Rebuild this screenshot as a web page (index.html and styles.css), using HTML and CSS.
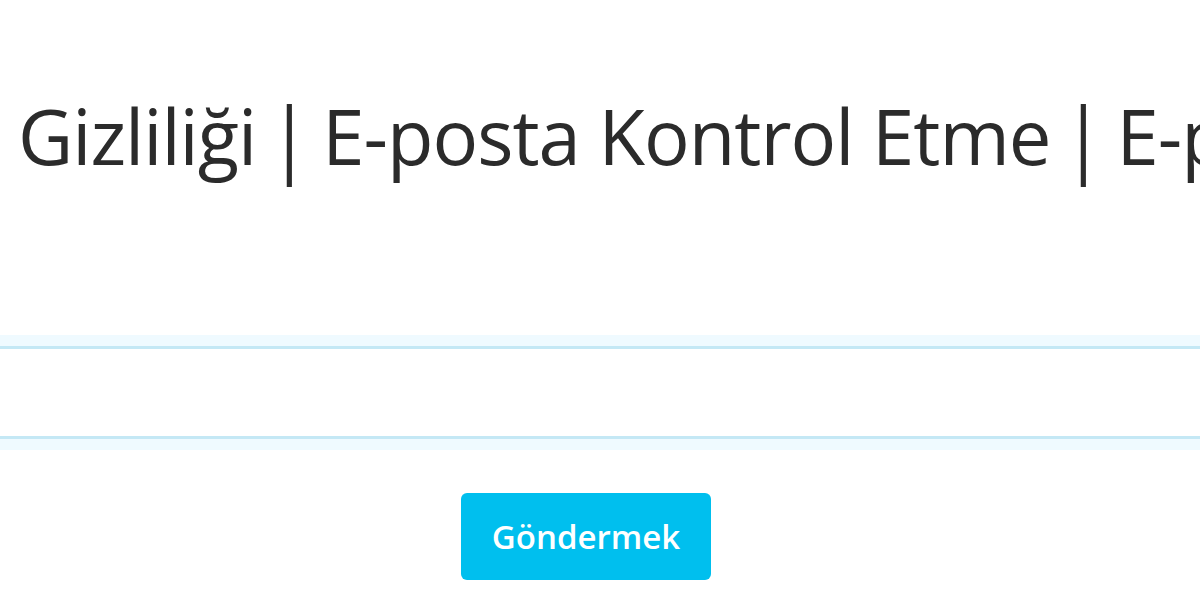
FILE: index.html
```html
<!DOCTYPE html>
<html lang="tr">
<head>
<meta charset="utf-8">
<title>E-posta Gizliliği</title>
<link rel="stylesheet" href="styles.css">
</head>
<body>
<div class="page">
  <h1 class="title">Gizliliği<span class="sep">|</span>E-posta Kontrol Etme<span class="sep">|</span>E-posta Doğrulama</h1>
  <form class="form">
    <input class="field" type="text" aria-label="E-posta">
    <div class="actions">
      <button class="btn" type="button">Göndermek</button>
    </div>
  </form>
</div>
</body>
</html>
```
FILE: styles.css
```css
html, body {
  margin: 0;
  padding: 0;
  background: #ffffff;
  overflow: hidden;
}
.page {
  width: 1200px;
  height: 600px;
  overflow: hidden;
  font-family: "Open Sans", "Noto Sans", sans-serif;
}
.title {
  margin: 0;
  padding: 86px 0 0 18px;
  height: 255px;
  box-sizing: border-box;
  white-space: nowrap;
  font-weight: 400;
  font-size: 76px;
  line-height: 100px;
  letter-spacing: -1px;
  word-spacing: 0;
  color: #2b2b2b;
}
.sep {
  display: inline-block;
  width: 66px;
  text-align: center;
  letter-spacing: 0;
  transform: scaleY(1.08);
}
.form {
  display: flex;
  flex-direction: column;
}
.field {
  margin: 91px -30px 0;
  height: 93px;
  box-sizing: border-box;
  border: 3px solid #c4e8f5;
  border-left: 0;
  border-right: 0;
  background: #ffffff;
  box-shadow: 0 0 0 11px #effaff;
  outline: none;
}
.actions {
  display: flex;
  padding: 54px 0 0 461px;
}
.btn {
  width: 250px;
  height: 87px;
  border: 0;
  border-radius: 6px;
  background: #00bfee;
  color: #ffffff;
  font-family: "Open Sans", "Noto Sans", sans-serif;
  font-weight: 600;
  font-size: 33px;
  cursor: pointer;
}
```
